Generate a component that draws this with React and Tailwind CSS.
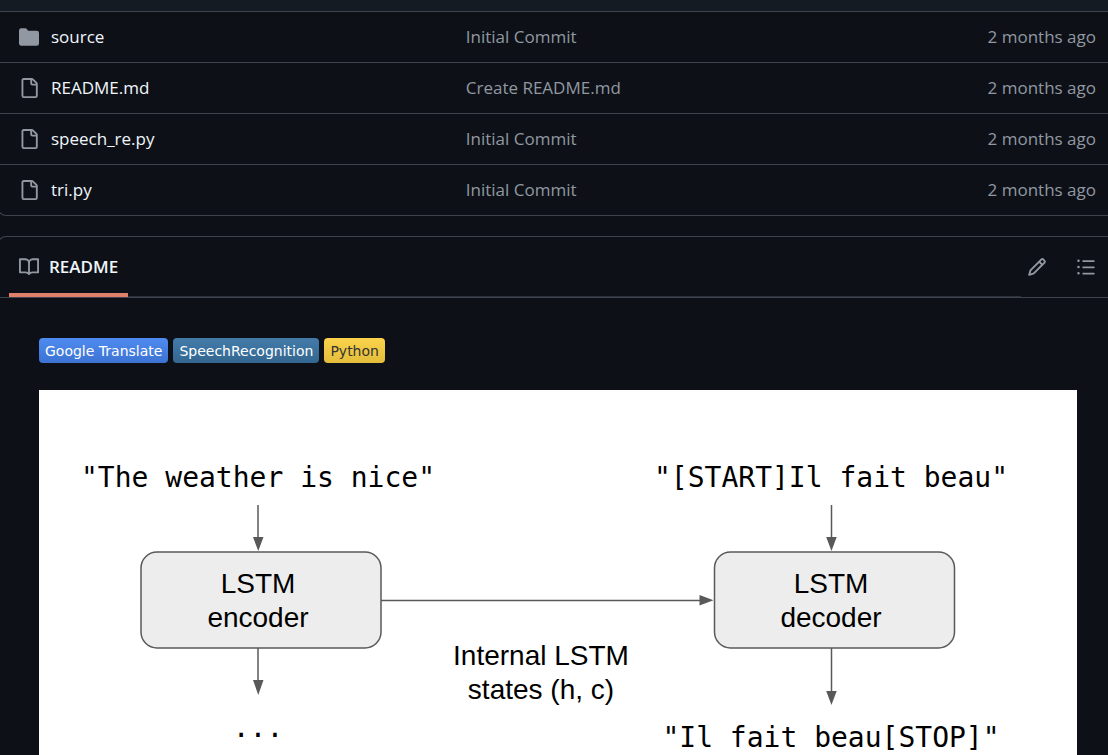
const ICONS = {
  folder:
    'M1.75 1A1.75 1.75 0 0 0 0 2.75v10.5C0 14.216.784 15 1.75 15h12.5A1.75 1.75 0 0 0 16 13.25v-8.5A1.75 1.75 0 0 0 14.25 3H7.5a.25.25 0 0 1-.2-.1l-.9-1.2C6.07 1.26 5.55 1 5 1H1.75Z',
  file: 'M2 1.75C2 .784 2.784 0 3.75 0h6.586c.464 0 .909.184 1.237.513l2.914 2.914c.329.328.513.773.513 1.237v9.586A1.75 1.75 0 0 1 13.25 16h-9.5A1.75 1.75 0 0 1 2 14.25Zm1.75-.25a.25.25 0 0 0-.25.25v12.5c0 .138.112.25.25.25h9.5a.25.25 0 0 0 .25-.25V6h-2.75A1.75 1.75 0 0 1 9 4.25V1.5Zm6.75.062V4.25c0 .138.112.25.25.25h2.688l-.011-.013-2.914-2.914-.013-.011Z',
  book: 'M0 1.75A.75.75 0 0 1 .75 1h4.253c1.227 0 2.317.59 3 1.501A3.743 3.743 0 0 1 11.006 1h4.245a.75.75 0 0 1 .75.75v10.5a.75.75 0 0 1-.75.75h-4.507a2.25 2.25 0 0 0-1.591.659l-.622.621a.75.75 0 0 1-1.06 0l-.622-.621A2.25 2.25 0 0 0 5.258 13H.75a.75.75 0 0 1-.75-.75Zm7.251 10.324.004-5.073-.002-2.253A2.25 2.25 0 0 0 5.003 2.5H1.5v9h3.757a3.75 3.75 0 0 1 1.994.574ZM8.755 4.75l-.004 7.322a3.752 3.752 0 0 1 1.992-.572H14.5v-9h-3.495a2.25 2.25 0 0 0-2.25 2.25Z',
  pencil:
    'M11.013 1.427a1.75 1.75 0 0 1 2.474 0l1.086 1.086a1.75 1.75 0 0 1 0 2.474l-8.61 8.61c-.21.21-.47.364-.756.445l-3.251.93a.75.75 0 0 1-.927-.928l.929-3.25c.081-.286.235-.547.445-.758l8.61-8.61Zm.176 4.823L9.75 4.81l-6.286 6.287a.253.253 0 0 0-.064.108l-.558 1.953 1.953-.558a.253.253 0 0 0 .108-.064Zm1.238-3.763a.25.25 0 0 0-.354 0L10.811 3.75l1.439 1.44 1.263-1.263a.25.25 0 0 0 0-.354Z',
  list: 'M5.75 2.5h8.5a.75.75 0 0 1 0 1.5h-8.5a.75.75 0 0 1 0-1.5Zm0 5h8.5a.75.75 0 0 1 0 1.5h-8.5a.75.75 0 0 1 0-1.5Zm0 5h8.5a.75.75 0 0 1 0 1.5h-8.5a.75.75 0 0 1 0-1.5ZM2 14a1 1 0 1 1 0-2 1 1 0 0 1 0 2Zm1-6a1 1 0 1 1-2 0 1 1 0 0 1 2 0ZM2 4a1 1 0 1 1 0-2 1 1 0 0 1 0 2Z',
};

function Icon({ name }) {
  return (
    <svg viewBox="0 0 16 16" className="size-5 shrink-0 fill-[#9198a1]" aria-hidden="true">
      <path d={ICONS[name]} />
    </svg>
  );
}

const FILES = [
  { icon: 'folder', name: 'source', message: 'Initial Commit' },
  { icon: 'file', name: 'README.md', message: 'Create README.md' },
  { icon: 'file', name: 'speech_re.py', message: 'Initial Commit' },
  { icon: 'file', name: 'tri.py', message: 'Initial Commit' },
];

const BADGES = [
  { label: 'Google Translate', style: 'from-[#4f8bf0] to-[#3c73d3] text-white' },
  { label: 'SpeechRecognition', style: 'from-[#437ba9] to-[#336791] text-white' },
  { label: 'Python', style: 'from-[#fbd34b] to-[#e3bd3b] text-[#333333]' },
];

function FileTable() {
  return (
    <div className="-ml-0.5 overflow-hidden rounded-bl-lg border-b border-l border-[#3d444d]">
      <div className="h-[11px] bg-[#151b23]" />
      <table className="w-full table-fixed border-separate border-spacing-0 text-[17px] leading-6">
        <tbody>
          {FILES.map((file) => (
            <tr key={file.name}>
              <td className="h-[51px] w-[42%] border-t border-[#3d444d] pl-5">
                <div className="flex items-center gap-3">
                  <Icon name={file.icon} />
                  <a href="#" className="text-[#f0f6fc]">{file.name}</a>
                </div>
              </td>
              <td className="border-t border-[#3d444d] pl-px">
                <a href="#" className="text-[#9198a1]">{file.message}</a>
              </td>
              <td className="w-40 border-t border-[#3d444d] pr-3 text-right text-[#9198a1]">2 months ago</td>
            </tr>
          ))}
        </tbody>
      </table>
    </div>
  );
}

function Diagram() {
  return (
    <svg viewBox="0 0 1038 365" className="block w-full bg-white" role="img" aria-label="LSTM encoder and decoder">
      <g stroke="#595959" strokeWidth="1.5" fill="#ededed">
        <rect x="102" y="162" width="240" height="96" rx="16" />
        <rect x="675.5" y="162" width="240" height="96" rx="16" />
        <path d="M219 115v34M219 258v34M792.5 115v34M792.5 258v45M342 210.5h320" fill="none" />
      </g>
      <path
        d="M214 147h10.500l-5.250 14zM214 290h10.500l-5.250 15zM787.200 147h10.500l-5.250 14zM787.200 301h10.500l-5.250 14zM660.500 205v10.500l14-5.250z"
        fill="#595959"
      />
      <g className="font-['DejaVu_Sans_Mono',monospace] text-[28px]" textAnchor="middle">
        <text x="219" y="97">"The weather is nice"</text>
        <text x="792" y="97">"[START]Il fait beau"</text>
        <text x="219" y="347">...</text>
        <text x="792" y="357">"Il fait beau[STOP]"</text>
      </g>
      <g className="font-['Liberation_Sans',sans-serif] text-[28px]" textAnchor="middle">
        <text x="219" y="203">LSTM</text>
        <text x="219" y="237">encoder</text>
        <text x="792" y="203">LSTM</text>
        <text x="792" y="237">decoder</text>
        <text x="502" y="275">Internal LSTM</text>
        <text x="502" y="309">states (h, c)</text>
      </g>
    </svg>
  );
}

function Readme() {
  return (
    <section className="-ml-0.5 mt-5 rounded-tl-lg border-l border-t border-[#3d444d]">
      <header className="flex h-[61px] items-center justify-between border-b border-[#3d444d] pl-2.5">
        <nav className="flex flex-1 self-stretch border-b border-[#2b3138]">
          <a
            href="#"
            className="-mb-px flex items-center gap-2.5 border-b-4 border-[#e07f6a] px-2.5 pt-1 text-[17px] font-semibold text-[#f0f6fc]"
          >
            <Icon name="book" />
            README
          </a>
        </nav>
        <div className="flex gap-[29px] pl-1.5 pr-3">
          <button type="button" aria-label="Edit file"><Icon name="pencil" /></button>
          <button type="button" aria-label="Outline"><Icon name="list" /></button>
        </div>
      </header>
      <article className="pl-10 pr-[31px] pt-10">
        <div className="mb-[27px] flex gap-[5px]">
          {BADGES.map((badge) => (
            <a
              key={badge.label}
              href="#"
              className={`flex h-[25px] items-center rounded bg-linear-to-b px-1.5 pt-0.5 font-['DejaVu_Sans',sans-serif] text-[14px] ${badge.style}`}
            >
              {badge.label}
            </a>
          ))}
        </div>
        <Diagram />
      </article>
    </section>
  );
}

export default function App() {
  return (
    <main className="min-h-screen overflow-hidden bg-[#0d1117] font-['Open_Sans','Noto_Sans',sans-serif]">
      <FileTable />
      <Readme />
    </main>
  );
}
